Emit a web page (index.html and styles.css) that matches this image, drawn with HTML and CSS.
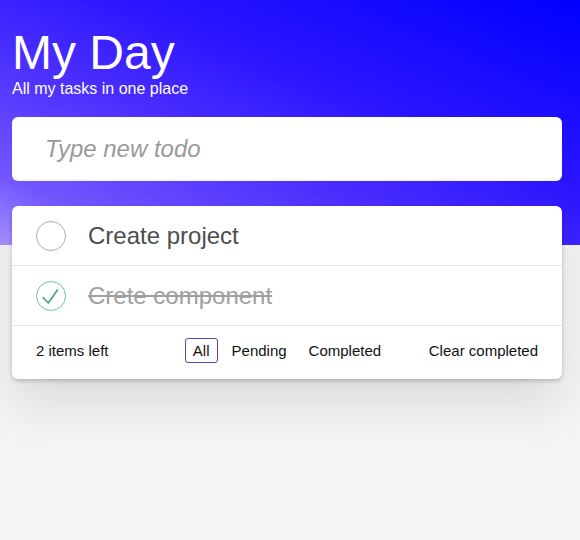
FILE: index.html
```html
<!DOCTYPE html>
<html lang="en">
<head>
<meta charset="utf-8">
<title>My Day</title>
<link rel="stylesheet" href="styles.css">
</head>
<body>
<main class="app">
  <header class="hero">
    <h1 class="title">My Day</h1>
    <p class="subtitle">All my tasks in one place</p>
  </header>
  <input class="new-todo" type="text" placeholder="Type new todo">
  <section class="card">
    <ul class="list">
      <li class="item">
        <span class="toggle"></span>
        <span class="label">Create project</span>
      </li>
      <li class="item done">
        <span class="toggle checked">
          <svg viewBox="0 0 30 30" width="30" height="30"><polyline points="7,16.5 12.3,22 21.5,9" fill="none" stroke="#3d9e86" stroke-width="1.6" stroke-linecap="round" stroke-linejoin="round"/></svg>
        </span>
        <span class="label">Crete component</span>
      </li>
    </ul>
    <footer class="footer">
      <span class="count">2 items left</span>
      <nav class="filters">
        <a class="filter selected">All</a>
        <a class="filter">Pending</a>
        <a class="filter">Completed</a>
      </nav>
      <span class="clear">Clear completed</span>
    </footer>
  </section>
</main>
</body>
</html>
```
FILE: styles.css
```css
html, body {
  margin: 0;
  padding: 0;
}
body {
  min-height: 540px;
  font-family: "Liberation Sans", Arial, sans-serif;
  background:
    linear-gradient(to top right, #a891ff 0%, #7356ff 14%, #4a2eff 40%, #2a14ff 62%, #0000ff 100%) top left / 100% 245px no-repeat,
    #f4f4f4;
}
.app {
  padding: 26px 18px 0 12px;
}
.title {
  margin: 0;
  font-size: 48px;
  line-height: 54px;
  font-weight: normal;
  color: #fff;
}
.subtitle {
  margin: 0;
  font-size: 16px;
  line-height: 18px;
  color: #fff;
}
.new-todo {
  display: block;
  box-sizing: border-box;
  width: 100%;
  height: 64px;
  margin: 19px 0 0;
  padding: 0 20px 0 33px;
  border: 0;
  border-radius: 6px;
  background: #fff;
  font-family: inherit;
  font-size: 24px;
  color: #4d4d4d;
  outline: none;
  box-shadow: inset 0 -2px 1px rgba(0, 0, 0, 0.03);
}
.new-todo::placeholder {
  color: #9a9a9a;
  font-style: italic;
}
.card {
  margin-top: 25px;
  background: #fff;
  border-radius: 6px;
  box-shadow: 0 2px 4px 0 rgba(0, 0, 0, 0.2), 0 25px 50px 0 rgba(0, 0, 0, 0.1);
}
.list {
  list-style: none;
  margin: 0;
  padding: 0;
}
.item {
  display: flex;
  align-items: center;
  gap: 22px;
  box-sizing: border-box;
  height: 60px;
  padding: 0 24px;
  border-bottom: 1px solid #e6e6e6;
}
.toggle {
  box-sizing: border-box;
  width: 30px;
  height: 30px;
  flex: none;
  border: 1px solid #ababab;
  border-radius: 50%;
  position: relative;
}
.toggle.checked {
  border-color: #6fbfaa;
}
.toggle svg {
  position: absolute;
  left: -1px;
  top: -1px;
}
.label {
  font-size: 24px;
  color: #4d4d4d;
}
.done .label {
  color: #a0a0a0;
  text-decoration: line-through;
}
.footer {
  display: flex;
  align-items: center;
  box-sizing: border-box;
  height: 53px;
  padding: 0 24px 4px;
  font-size: 15px;
  color: #111;
}
.count {
  flex: 1;
}
.filters {
  display: flex;
}
.filter {
  margin: 3px;
  padding: 3px 7px;
  border: 1px solid transparent;
  border-radius: 3px;
  line-height: 17px;
}
.filter.selected {
  border-color: #5847a8;
}
.clear {
  flex: 1;
  text-align: right;
}
```
